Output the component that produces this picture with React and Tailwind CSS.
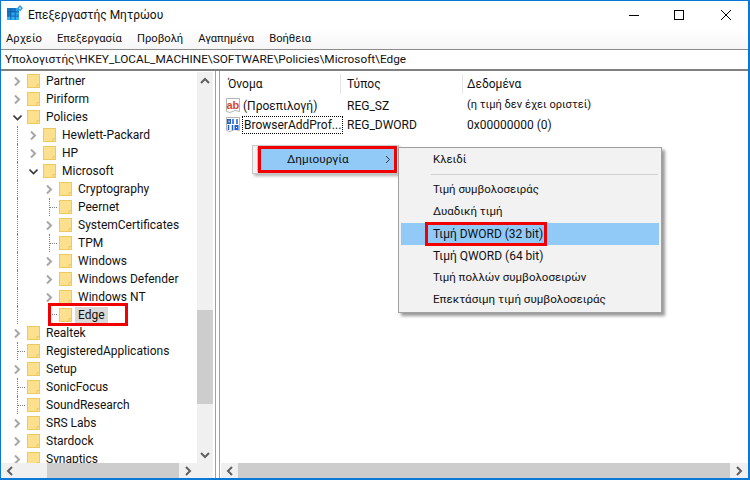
import React from 'react';

const tree = [
  { level: 0, name: 'Partner', arrow: 'right' },
  { level: 0, name: 'Piriform', arrow: 'right' },
  { level: 0, name: 'Policies', arrow: 'down' },
  { level: 1, name: 'Hewlett-Packard', arrow: 'right' },
  { level: 1, name: 'HP', arrow: 'right' },
  { level: 1, name: 'Microsoft', arrow: 'down' },
  { level: 2, name: 'Cryptography', arrow: 'right' },
  { level: 2, name: 'Peernet' },
  { level: 2, name: 'SystemCertificates', arrow: 'right' },
  { level: 2, name: 'TPM' },
  { level: 2, name: 'Windows', arrow: 'right' },
  { level: 2, name: 'Windows Defender', arrow: 'right' },
  { level: 2, name: 'Windows NT', arrow: 'right' },
  { level: 2, name: 'Edge', selected: true, last: true },
  { level: 0, name: 'Realtek', arrow: 'right' },
  { level: 0, name: 'RegisteredApplications' },
  { level: 0, name: 'Setup', arrow: 'right' },
  { level: 0, name: 'SonicFocus' },
  { level: 0, name: 'SoundResearch' },
  { level: 0, name: 'SRS Labs', arrow: 'right' },
  { level: 0, name: 'Stardock', arrow: 'right' },
  { level: 0, name: 'Synaptics', arrow: 'right' },
];

const menus = ['Αρχείο', 'Επεξεργασία', 'Προβολή', 'Αγαπημένα', 'Βοήθεια'];

const subItems = [
  { label: 'Τιμή συμβολοσειράς', size: 'text-[11.4px]' },
  { label: 'Δυαδική τιμή', size: 'text-[11.5px]' },
  { label: 'Τιμή DWORD (32 bit)', size: 'text-[12px]', active: true },
  { label: 'Τιμή QWORD (64 bit)', size: 'text-[12px]' },
  { label: 'Τιμή πολλών συμβολοσειρών', size: 'text-[11.5px]' },
  { label: 'Επεκτάσιμη τιμή συμβολοσειράς', size: 'text-[11.6px]' },
];

const Folder = () => (
  <svg width="13" height="14" viewBox="0 0 13 14" className="shrink-0">
    <rect x="0.5" y="0.5" width="12" height="13" fill="#fde08d" stroke="#eec95f" />
    <path d="M10 13.5V10.5H12.5" fill="none" stroke="#eec95f" />
  </svg>
);

const TreeArrow = ({ dir }) => (
  <svg width="9" height="9" viewBox="0 0 9 9" className="ml-[4px]">
    {dir === 'down' ? (
      <path d="M0.5 2.5L4.5 6.5L8.5 2.5" fill="none" stroke="#3a3a3a" strokeWidth="1.6" />
    ) : (
      <path d="M2 0.5L6 4.5L2 8.5" fill="none" stroke="#a6a6a6" strokeWidth="2" />
    )}
  </svg>
);

const ScrollArrow = ({ dir }) => {
  const d = {
    up: 'M1 7L5 3L9 7',
    down: 'M1 3L5 7L9 3',
    left: 'M7 1L3 5L7 9',
    right: 'M3 1L7 5L3 9',
  }[dir];
  return (
    <svg width="10" height="10" viewBox="0 0 10 10">
      <path d={d} fill="none" stroke="#606060" strokeWidth="2" />
    </svg>
  );
};

// 16px wide tree column: a dotted guide, optionally with a stub towards the folder
const Guide = ({ stub, half }) => (
  <span className="w-[16px] self-stretch shrink-0 flex">
    <span className="w-[8px] shrink-0" />
    <span className={`w-[8px] border-l border-dotted border-[#808080] flex ${half ? 'h-[9px] items-end' : 'items-center'}`}>
      {stub && <span className="w-full border-t border-dotted border-[#808080]" />}
    </span>
  </span>
);

const Cell = ({ children }) => <span className="w-[16px] shrink-0 flex items-center">{children}</span>;

const TreeRow = ({ item }) => (
  <div className="flex items-center h-[18px] pl-[8px] whitespace-nowrap">
    {item.level > 0 && <Guide />}
    {item.level > 1 && <Cell />}
    {item.arrow ? <Cell><TreeArrow dir={item.arrow} /></Cell> : <Guide stub half={item.last} />}
    <span className="w-[2px] shrink-0" />
    <Folder />
    <span className={`ml-[3px] px-[3px] h-[17px] leading-[17px] ${item.selected ? 'bg-[#d9d9d9]' : ''}`}>{item.name}</span>
  </div>
);

const AbIcon = () => (
  <svg width="16" height="16" viewBox="0 0 16 16" className="shrink-0">
    <path d="M1.5 0.5H14.5V13.5L10 12.5L5 14.5L1.5 13.5Z" fill="#fff" stroke="#b5b5b5" />
    <text x="1.5" y="10.5" fontSize="11" fontWeight="700" fontFamily="Liberation Sans, sans-serif" fill="#d9472b">ab</text>
  </svg>
);

const BinIcon = () => (
  <svg width="16" height="16" viewBox="0 0 16 16" className="shrink-0">
    <path d="M1.5 0.5H14.5V13.5L10 12.5L5 14.5L1.5 13.5Z" fill="#fff" stroke="#b5b5b5" />
    <g fill="none" stroke="#1f5fd0" strokeWidth="1.5">
      <rect x="2.75" y="2.75" width="2.5" height="3.5" />
      <path d="M8 2V7M12 2V7" />
      <path d="M3.5 8V13M7.5 8V13" />
      <rect x="10.25" y="8.75" width="2.5" height="3.5" />
    </g>
  </svg>
);

const AppIcon = () => (
  <svg width="16" height="16" viewBox="0 0 16 16" className="shrink-0 mb-[3px]">
    <rect x="0" y="3" width="12" height="12" fill="#0f5fa8" />
    <g fill="#1976c8">
      <rect x="0" y="3" width="3.4" height="3.4" />
      <rect x="4.3" y="3" width="3.4" height="3.4" />
      <rect x="0" y="7.3" width="3.4" height="3.4" />
    </g>
    <g fill="#2aa2ee">
      <rect x="8.6" y="3" width="3.4" height="3.4" />
      <rect x="8.6" y="7.3" width="3.4" height="3.4" />
      <rect x="4.3" y="7.3" width="3.4" height="3.4" />
    </g>
    <g fill="#33b1f5">
      <rect x="0" y="11.6" width="3.4" height="3.4" />
      <rect x="4.3" y="11.6" width="3.4" height="3.4" />
      <rect x="8.6" y="11.6" width="3.4" height="3.4" />
    </g>
    <path d="M13 0L16 3.3L13 6.6L10 3.3Z" fill="#2f9be0" />
    <path d="M13 2L14.2 3.3L13 4.6L11.8 3.3Z" fill="#bfe4fa" />
  </svg>
);

export default function App() {
  return (
    <div className="relative w-[750px] h-[480px] bg-white text-[12px] text-[#111] border border-[#0a78d4] border-r-2 border-b-2 overflow-hidden flex flex-col" style={{ fontFamily: 'Roboto, sans-serif' }}>
      {/* Title bar */}
      <div className="h-[29px] flex items-center pl-[6px] pb-[2px] shrink-0">
        <AppIcon />
        <span className="ml-[5px]">Επεξεργαστής Μητρώου</span>
        <div className="ml-auto flex items-center">
          <svg width="12" height="12" viewBox="0 0 12 12" className="mr-[33px]"><path d="M1 6.5H11" stroke="#000" /></svg>
          <svg width="12" height="12" viewBox="0 0 12 12" className="mr-[35px]"><rect x="1.5" y="1.5" width="9" height="9" fill="none" stroke="#000" /></svg>
          <svg width="12" height="12" viewBox="0 0 12 12" className="mr-[16px]"><path d="M1 1L11 11M11 1L1 11" stroke="#000" /></svg>
        </div>
      </div>
      {/* Menu bar */}
      <div className="h-[20px] flex items-center gap-[15px] pl-[5px] shrink-0 text-[11.2px] bg-gradient-to-b from-white to-[#f5f5f5] border-b border-[#8c8c8c]">
        {menus.map((m) => <span key={m}>{m}</span>)}
      </div>
      {/* Address bar */}
      <div className="h-[21px] flex items-center pl-[4px] shrink-0 text-[11.8px] border-b-2 border-[#808080]">
        Υπολογιστής\HKEY_LOCAL_MACHINE\SOFTWARE\Policies\Microsoft\Edge
      </div>

      <div className="flex-1 flex min-h-0">
        {/* Tree pane */}
        <div className="w-[212px] shrink-0 flex flex-col">
          <div className="flex-1 flex min-h-0">
            <div className="flex-1 overflow-hidden pt-[1px]">
              {tree.map((item) => <TreeRow key={item.name} item={item} />)}
            </div>
            <div className="w-[16px] bg-[#f0f0f0] flex flex-col items-center shrink-0 mt-[1px]">
              <div className="h-[17px] flex items-center justify-center shrink-0"><ScrollArrow dir="up" /></div>
              <div className="h-[221px] shrink-0" />
              <div className="h-[94px] w-full bg-[#cdcdcd] shrink-0" />
              <div className="flex-1" />
              <div className="h-[17px] flex items-center justify-center shrink-0"><ScrollArrow dir="down" /></div>
            </div>
          </div>
          <div className="h-[15px] bg-[#f0f0f0] flex items-center shrink-0">
            <div className="w-[16px] flex justify-center shrink-0 ml-[1px]"><ScrollArrow dir="left" /></div>
            <div className="w-[29px] shrink-0" />
            <div className="w-[132px] h-full bg-[#cdcdcd] shrink-0" />
            <div className="w-[18px] flex justify-center shrink-0"><ScrollArrow dir="right" /></div>
            <div className="flex-1" />
          </div>
        </div>

        {/* Splitter */}
        <div className="w-[5px] ml-[2px] shrink-0 border-x border-[#a0a0a0]" />

        {/* Value pane */}
        <div className="flex-1 flex flex-col min-w-0">
          <div className="flex-1 min-h-0 pt-[3px]">
            <div className="flex h-[20px] items-center">
              <div className="w-[121px] pl-[8px] border-r border-[#e5e5e5] h-full flex items-center">Όνομα</div>
              <div className="w-[122px] pl-[6px] border-r border-[#e5e5e5] h-full flex items-center">Τύπος</div>
              <div className="pl-[4px]">Δεδομένα</div>
            </div>
            <div className="flex h-[19px] items-center mt-[2px]">
              <div className="w-[121px] pl-[5px] flex items-center gap-[2px]"><AbIcon /><span>(Προεπιλογή)</span></div>
              <div className="w-[122px] pl-[6px]">REG_SZ</div>
              <div className="pl-[4px] text-[11.1px]">(η τιμή δεν έχει οριστεί)</div>
            </div>
            <div className="flex h-[19px] items-center">
              <div className="w-[121px] pl-[5px] flex items-center gap-[1px]"><BinIcon /><span className="border border-dotted border-black px-[1px] h-[18px] leading-[16px] whitespace-nowrap">BrowserAddProf...</span></div>
              <div className="w-[122px] pl-[6px]">REG_DWORD</div>
              <div className="pl-[4px]">0x00000000 (0)</div>
            </div>
          </div>
          <div className="h-[15px] bg-[#f0f0f0] flex items-center shrink-0 ml-[1px]">
            <div className="w-[17px] flex justify-center shrink-0"><ScrollArrow dir="left" /></div>
            <div className="flex-1 h-full bg-[#cdcdcd]" />
            <div className="w-[18px] flex justify-center shrink-0"><ScrollArrow dir="right" /></div>
          </div>
        </div>
      </div>

      {/* Context menu */}
      <div className="absolute left-[251px] top-[144px] w-[147px] h-[29px] bg-[#f2f2f2] border border-[#c8c8c8] flex items-center shadow-[2px_2px_3px_rgba(0,0,0,0.3)]">
        <div className="ml-[4px] w-[138px] h-[25px] bg-[#91c9f7] flex items-center pl-[30px] relative text-[11.8px]">
          Δημιουργία
          <svg width="6" height="9" viewBox="0 0 6 9" className="absolute right-[4px] top-[8px]"><path d="M1 1L4.5 4.5L1 8" fill="none" stroke="#333" /></svg>
        </div>
      </div>

      {/* Submenu */}
      <div className="absolute left-[397px] top-[146px] w-[264px] h-[166px] bg-[#f2f2f2] border border-[#a0a0a0] shadow-[3px_3px_3px_rgba(0,0,0,0.4)] px-[2px] pt-[1px]">
        <div className="h-[22px] flex items-center pl-[32px] text-[11.4px]">Κλειδί</div>
        <div className="ml-[30px] mr-[1px] mt-[3px] mb-[4px] border-t border-[#d0d0d0]" />
        {subItems.map((s) => (
          <div key={s.label} className={`h-[22px] flex items-center pl-[32px] ${s.size} ${s.active ? 'bg-[#91c9f7]' : ''}`}>{s.label}</div>
        ))}
      </div>

      {/* Red annotation boxes */}
      <div className="absolute left-[47px] top-[302px] w-[80px] h-[23px] border-[3px] border-[#f00000]" />
      <div className="absolute left-[257px] top-[145px] w-[139px] h-[27px] border-[3px] border-[#f00000]" />
      <div className="absolute left-[424px] top-[221px] w-[122px] h-[24px] border-[3px] border-[#f00000]" />
    </div>
  );
}
